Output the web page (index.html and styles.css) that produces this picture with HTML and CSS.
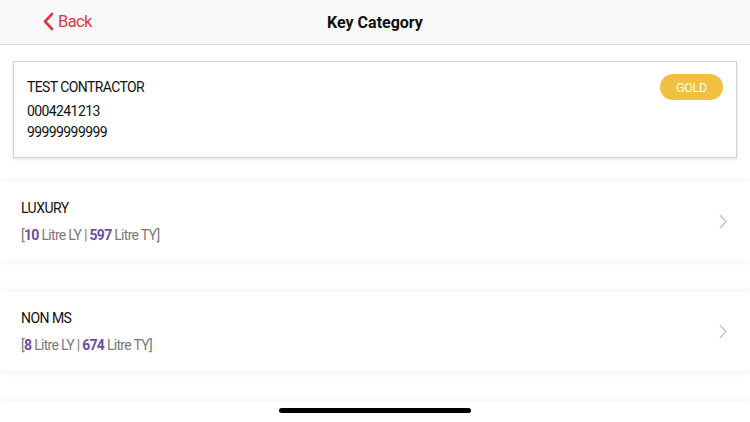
FILE: index.html
```html
<!DOCTYPE html>
<html lang="en">
<head>
<meta charset="UTF-8">
<meta name="viewport" content="width=device-width, initial-scale=1.0">
<title>Key Category</title>
<link rel="stylesheet" href="styles.css">
</head>
<body>

<header class="topbar">
    <a class="back" href="#">
        <svg width="12" height="19" viewBox="0 0 12 19"><path d="M10 2 L3 9.5 L10 17" fill="none" stroke="#d63b4c" stroke-width="2.6" stroke-linecap="round" stroke-linejoin="round"/></svg>
        <span>Back</span>
    </a>
    <h1>Key Category</h1>
</header>

<div class="contractor">
    <div class="info">
        <div class="name">TEST CONTRACTOR</div>
        <div class="code">0004241213</div>
        <div class="phone">99999999999</div>
    </div>
    <span class="badge">GOLD</span>
</div>

<ul class="categories">
    <li class="row">
        <div>
            <div class="title">LUXURY</div>
            <div class="volume">[<b>10</b> Litre LY | <b>597</b> Litre TY]</div>
        </div>
        <svg class="chev" width="8" height="15" viewBox="0 0 8 15"><path d="M1 1 L7 7.5 L1 14" fill="none" stroke="#c4c4c4" stroke-width="1.4"/></svg>
    </li>
    <li class="row">
        <div>
            <div class="title">NON MS</div>
            <div class="volume">[<b>8</b> Litre LY | <b>674</b> Litre TY]</div>
        </div>
        <svg class="chev" width="8" height="15" viewBox="0 0 8 15"><path d="M1 1 L7 7.5 L1 14" fill="none" stroke="#c4c4c4" stroke-width="1.4"/></svg>
    </li>
    <li class="row"></li>
</ul>

<div class="home-bar"></div>

</body>
</html>
```

FILE: styles.css
```css
html, body {
    height: 100%;
    overflow: hidden;
}

body {
    margin: 0;
    font-family: Roboto, "Liberation Sans", sans-serif;
    background-color: #fff;
    color: #111;
    position: relative;
    display: flex;
    flex-direction: column;
}

.topbar {
    flex: none;
    height: 44px;
    background-color: #f8f8f8;
    border-bottom: 1px solid #d9d9d9;
    display: flex;
    align-items: center;
    justify-content: center;
    position: relative;
}

.topbar h1 {
    margin: 0;
    font-size: 16px;
    font-weight: bold;
    color: #111;
}

.back {
    position: absolute;
    left: 42px;
    top: 12px;
    display: flex;
    align-items: center;
    gap: 4px;
    text-decoration: none;
    color: #d63b4c;
    font-size: 16.5px;
    letter-spacing: -0.6px;
}

.contractor {
    flex: none;
    margin: 16px 13px 0;
    height: 95px;
    border: 1px solid #d4d4d4;
    box-shadow: 0 1px 3px rgba(0, 0, 0, 0.15);
    display: flex;
    justify-content: space-between;
    align-items: flex-start;
    padding: 0 13px 0 13px;
}

.info {
    font-size: 14px;
    letter-spacing: -0.6px;
    padding-top: 17px;
}

.info .name {
    margin-bottom: 8px;
}

.info .code {
    margin-bottom: 5px;
}

.badge {
    margin-top: 12px;
    background-color: #f1bf42;
    color: #fff;
    font-size: 12.5px;
    letter-spacing: -0.3px;
    width: 63px;
    height: 26px;
    border-radius: 13px;
    display: flex;
    align-items: center;
    justify-content: center;
}

.categories {
    flex: 1;
    overflow: hidden;
    list-style-type: none;
    margin: 0;
    padding: 24px 0 0;
}

.row {
    height: 79px;
    margin-bottom: 31px;
    background-color: #fff;
    box-shadow: 0 0 8px rgba(0, 0, 0, 0.07);
    display: flex;
    align-items: center;
    justify-content: space-between;
    padding: 0 23px 0 21px;
}

.row .title {
    font-size: 14px;
    letter-spacing: -0.55px;
    margin-bottom: 11px;
}

.row .volume {
    font-size: 14px;
    letter-spacing: -0.7px;
    color: #7a7a7a;
}

.row .volume b {
    color: #6b4f9e;
}

.home-bar {
    position: absolute;
    left: 279px;
    top: 408px;
    width: 192px;
    height: 5px;
    border-radius: 3px;
    background-color: #000;
}
```
